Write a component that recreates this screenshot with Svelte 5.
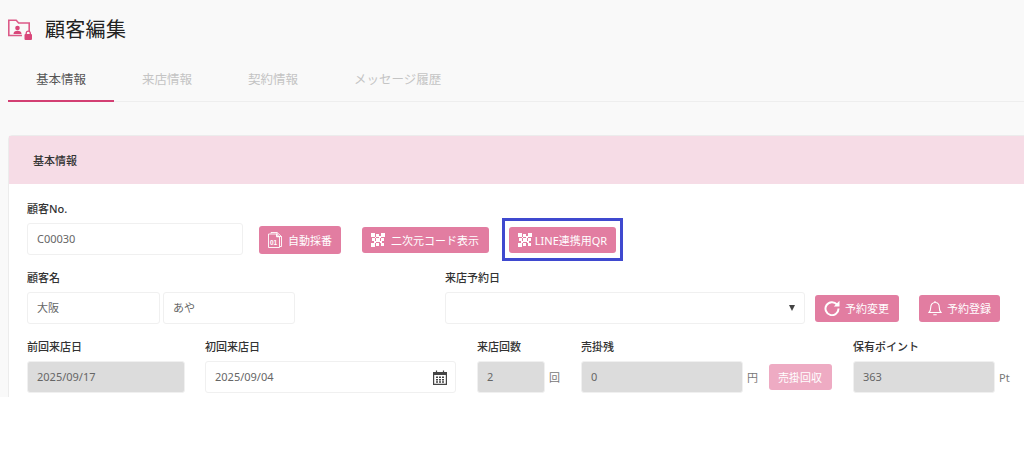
<script>
  const tabs = ['基本情報', '来店情報', '契約情報', 'メッセージ履歴'];
  // blocks of the QR glyph: x, y, size
  const qrCells = [
    [0, 0, 4], [10, 0, 4], [0, 10, 4], [10, 10, 3],
    [5, 1, 3], [5, 5, 4], [1, 5, 3], [10, 5, 3], [5, 10, 3], [8, 3, 2], [3, 8, 2], [9, 8, 2], [4, 4, 1]
  ];
</script>

{#snippet qr()}
  <svg class="icon qr" viewBox="0 0 14 14" aria-hidden="true">
    {#each qrCells as [x, y, s]}
      <rect {x} {y} width={s} height={s} fill="#fff" />
    {/each}
  </svg>
{/snippet}

<div class="page">
  <header class="title">
    <svg class="title-icon" viewBox="0 0 24 21" aria-hidden="true">
      <path fill="none" stroke="#dc5a88" stroke-width="1.600" d="M14 16.500H.8V1.300h7.400l2.400 2.700h10.600v8" />
      <circle cx="9.500" cy="9" r="2.300" fill="#d9477a" />
      <path fill="#d9477a" d="M5.500 15c0-2.500 1.700-3.300 4-3.300s4 .8 4 3.300z" />
      <rect x="16.500" y="15" width="7.500" height="6" rx="1" fill="#d9477a" />
      <path fill="none" stroke="#d9477a" stroke-width="1.300" d="M18.200 15v-1.200a2.100 2.100 0 0 1 4.100 0V15" />
    </svg>
    <h1>顧客編集</h1>
  </header>

  <nav class="tabs">
    {#each tabs as tab, i}
      <span class="tab" class:active={i === 0}>{tab}</span>
    {/each}
  </nav>

  <section class="card">
    <h2 class="card-head">基本情報</h2>
    <div class="card-body">
      <div class="row">
        <div class="field w-216">
          <span class="label">顧客No.</span>
          <div class="input">C00030</div>
        </div>
        <button class="btn tall ml-16">
          <svg class="icon" viewBox="0 0 14 16" aria-hidden="true">
            <path fill="none" stroke="#fff" stroke-width=".9" d="M3 1.500V.5h6l4.500 4v10H12M9 .5v4h4.500M.5 2h8l3 2.800V15.500H.5zM8.500 2v2.800h3" />
            <text x="2" y="12.500" font-size="6.500" font-weight="700" fill="#fff" font-family="Liberation Sans, sans-serif">01</text>
          </svg>
          自動採番
        </button>
        <button class="btn wide ml-21">{@render qr()}二次元コード表示</button>
        <div class="highlight">
          <button class="btn tight">{@render qr()}LINE連携用QR</button>
        </div>
      </div>

      <div class="row">
        <div class="field">
          <span class="label">顧客名</span>
          <div class="name-inputs">
            <div class="input w-133">大阪</div>
            <div class="input w-132">あや</div>
          </div>
        </div>
        <div class="field ml-150">
          <span class="label">来店予約日</span>
          <div class="reserve">
            <div class="input select"><span class="caret"></span></div>
            <button class="btn short change wide ml-10">
              <svg class="icon big" viewBox="0 0 16 16" aria-hidden="true">
                <path fill="none" stroke="#fff" stroke-width="2" d="M13 4.500A6.500 6.500 0 1 0 14.500 8.500" />
                <path fill="#fff" d="M15.500 .8v5.700H9.800z" />
              </svg>
              予約変更
            </button>
            <button class="btn short change ml-20">
              <svg class="icon" viewBox="0 0 14 16" aria-hidden="true">
                <path fill="none" stroke="#fff" stroke-width="1.100" d="M1 12.500c1.300-1.200 1.700-2.500 1.700-5C2.700 4.500 4.500 2.500 7 2.500s4.300 2 4.300 5c0 2.500.4 3.800 1.700 5zM5.300 14.800h3.400M7 1v1.500" />
              </svg>
              予約登録
            </button>
          </div>
        </div>
      </div>

      <div class="row">
        <div class="field w-158">
          <span class="label">前回来店日</span>
          <div class="input disabled">2025/09/17</div>
        </div>
        <div class="field w-251 ml-20">
          <span class="label">初回来店日</span>
          <div class="input date">
            2025/09/04
            <svg class="calendar" viewBox="0 0 14 15" aria-hidden="true">
              <path fill="none" stroke="#444" stroke-width="1.200" d="M.6 2.500h12.800v11.900H.6zM3.500.6v3M10.500.6v3" />
              <path fill="#444" d="M.6 2.500h12.800v2.500H.6zM3 6.500h2V8H3zM6 6.500h2V8H6zM9 6.500h2V8H9zM3 9h2v1.500H3zM6 9h2v1.500H6zM9 9h2v1.500H9zM3 11.300h2v1.500H3zM6 11.300h2v1.500H6zM9 11.300h2v1.500H9z" />
            </svg>
          </div>
        </div>
        <div class="field ml-21">
          <span class="label">来店回数</span>
          <div class="with-unit">
            <div class="input disabled w-68">2</div>
            <span class="unit">回</span>
          </div>
        </div>
        <div class="field ml-21">
          <span class="label">売掛残</span>
          <div class="with-unit">
            <div class="input disabled w-162">0</div>
            <span class="unit">円</span>
            <button class="btn faded ml-11">売掛回収</button>
          </div>
        </div>
        <div class="field ml-21">
          <span class="label">保有ポイント</span>
          <div class="with-unit">
            <div class="input disabled w-142">363</div>
            <span class="unit">Pt</span>
          </div>
        </div>
      </div>
    </div>
  </section>
</div>

<style>
  :global(body) {
    background: #fff;
    font-family: "Noto Sans", "Noto Sans CJK JP", sans-serif;
  }

  .page {
    height: 397px;
    width: 1024px;
    overflow: hidden;
    background: #f9f9f9;
    box-sizing: border-box;
    padding-left: 8px;
  }

  .title {
    display: flex;
    align-items: center;
    height: 57px;
  }

  .title-icon {
    width: 24px;
    height: 21px;
    margin-right: 13px;
    margin-top: 1px;
  }

  h1 {
    margin: 0;
    font-size: 20px;
    font-weight: 400;
    color: #222;
    letter-spacing: 0.3px;
  }

  .tabs {
    display: flex;
    height: 44px;
    border-bottom: 1px solid #eee;
  }

  .tab {
    padding: 0 28px;
    font-size: 12.500px;
    line-height: 46px;
    color: #c4c4c4;
    box-sizing: border-box;
  }

  .tab.active {
    color: #555;
    height: 45px;
    border-bottom: 2px solid #d33f73;
  }

  .card {
    margin-top: 33px;
    width: 1100px;
    background: #fff;
    border: 1px solid #ececec;
    border-radius: 4px 0 0 0;
  }

  .card-head {
    margin: 0;
    height: 48px;
    padding-left: 24px;
    background: #f6dce6;
    font-size: 11px;
    font-weight: 500;
    line-height: 49px;
    color: #333;
  }

  .card-body {
    padding: 0 0 20px 18px;
  }

  .row {
    display: flex;
    align-items: flex-end;
    height: 69px;
  }

  .row:first-child {
    height: 71px;
  }

  .field {
    display: flex;
    flex-direction: column;
    flex: none;
  }

  .label {
    font-size: 11px;
    font-weight: 500;
    color: #333;
    height: 23px;
    line-height: 17px;
  }

  .input {
    height: 32px;
    box-sizing: border-box;
    border: 1px solid #f0f0f0;
    border-radius: 3px;
    background: #fff;
    padding: 0 9px;
    font-size: 11px;
    line-height: 30px;
    color: #666;
  }

  .input.disabled {
    background: #dcdcdc;
  }

  .date {
    display: flex;
    justify-content: space-between;
    align-items: center;
  }

  .calendar {
    width: 14px;
    height: 15px;
    margin-right: -1px;
  }

  .select {
    display: flex;
    align-items: center;
    justify-content: flex-end;
    width: 360px;
  }

  .caret {
    width: 0;
    height: 0;
    border-left: 3px solid transparent;
    border-right: 3px solid transparent;
    border-top: 6px solid #444;
  }

  .name-inputs,
  .reserve,
  .with-unit {
    display: flex;
    align-items: center;
  }

  .name-inputs {
    gap: 3px;
  }

  .unit {
    font-size: 11px;
    color: #777;
    margin-left: 4px;
  }

  .btn {
    display: inline-flex;
    align-items: center;
    justify-content: center;
    gap: 6px;
    flex: none;
    height: 26px;
    padding: 0 9px;
    border: none;
    border-radius: 3px;
    background: #e27da1;
    color: #fff;
    font-family: inherit;
    font-size: 11px;
  }

  .btn.tall {
    height: 28px;
    margin-bottom: 1px;
  }

  .btn.wide {
    padding-right: 10px;
  }

  .row:first-child .btn:not(.tall) {
    margin-bottom: 2px;
  }

  .btn.short {
    height: 27px;
  }

  .btn.change {
    gap: 5px;
  }

  .btn.faded {
    background: #eeabc3;
    padding-right: 10px;
  }

  .highlight {
    display: flex;
    flex: none;
    align-items: center;
    justify-content: center;
    width: 121px;
    height: 43px;
    box-sizing: border-box;
    margin-left: 13px;
    margin-bottom: -6px;
    border: 3px solid #3f49cf;
  }

  .row:first-child .highlight .btn {
    margin-bottom: 0;
    gap: 3px;
  }

  .icon {
    width: 14px;
    height: 16px;
    flex: none;
  }

  .icon.qr {
    height: 14px;
  }

  .icon.big {
    width: 16px;
    height: 16px;
  }

  .w-68 { width: 68px; }
  .w-132 { width: 132px; }
  .w-133 { width: 133px; }
  .w-142 { width: 142px; }
  .w-158 { width: 158px; }
  .w-162 { width: 162px; }
  .w-216 { width: 216px; }
  .w-251 { width: 251px; }
  .ml-10 { margin-left: 10px; }
  .ml-11 { margin-left: 11px; }
  .ml-16 { margin-left: 16px; }
  .ml-20 { margin-left: 20px; }
  .ml-21 { margin-left: 21px; }
  .ml-150 { margin-left: 150px; }
</style>
